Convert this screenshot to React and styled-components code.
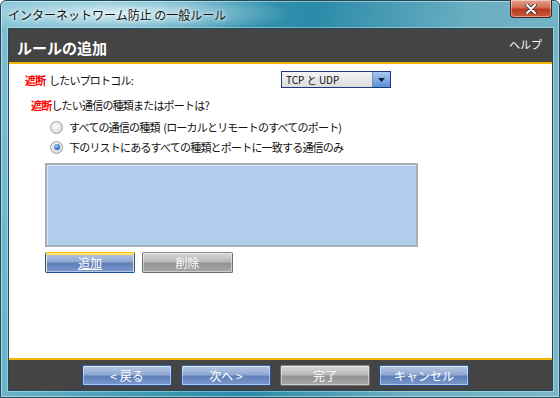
import React from 'react'
import styled, { createGlobalStyle } from 'styled-components'

const Global = createGlobalStyle`
  html, body { margin: 0; padding: 0; }
  body {
    width: 560px;
    height: 398px;
    overflow: hidden;
    font-family: "Noto Sans CJK JP", "Noto Sans", sans-serif;
  }
`

const Window = styled.div`
  width: 560px;
  height: 398px;
  box-sizing: border-box;
  display: flex;
  flex-direction: column;
  border: 1px solid #1f4a57;
  border-radius: 6px 6px 0 0;
  background:
    radial-gradient(ellipse 170px 22px at 120px 12px, rgba(235, 250, 255, 0.85), rgba(235, 250, 255, 0) 100%),
    linear-gradient(100deg, #7fc0d2 0%, #3d98b3 35%, #2a8aa8 50%, #6aaec2 75%, #79b7c8 100%);
  box-shadow: inset 0 0 0 1px rgba(255, 255, 255, 0.45);
`

const TitleBar = styled.div`
  height: 27px;
  display: flex;
  align-items: flex-start;
  justify-content: space-between;
  padding-left: 7px;
`

const TitleText = styled.div`
  font-size: 12px;
  line-height: 12px;
  margin-top: 8px;
  color: #111;
  text-shadow: 0 0 6px #fff, 0 0 3px #fff;
`

const CloseButton = styled.div`
  width: 42px;
  height: 18px;
  margin-right: 7px;
  margin-top: -1px;
  box-sizing: border-box;
  border: 1px solid #4a2420;
  border-top: none;
  border-radius: 0 0 4px 4px;
  background: linear-gradient(#e7a592 0%, #d26a50 45%, #b8391f 55%, #cc5a3c 100%);
  box-shadow: inset 0 0 0 1px rgba(255, 255, 255, 0.4);
  display: flex;
  align-items: center;
  justify-content: center;
`

const Client = styled.div`
  flex: 1;
  margin: 0 6px 6px 7px;
  display: flex;
  flex-direction: column;
  border: 1px solid #1e4b59;
  box-shadow: 0 0 0 1px rgba(255, 255, 255, 0.35);
  background: #444;
`

const Header = styled.div`
  height: 33px;
  display: flex;
  justify-content: space-between;
  align-items: flex-start;
  padding: 0 10px 0 8px;
  color: #fff;
  border-bottom: 2px solid #f4b400;
`

const HeaderTitle = styled.div`
  font-size: 15px;
  font-weight: 700;
  line-height: 16px;
  margin-top: 11px;
`

const Help = styled.div`
  font-size: 11px;
  line-height: 11px;
  margin-top: 10px;
`

const Content = styled.div`
  flex: 1;
  background: #fff;
  padding: 7px 0 0 16px;
  font-size: 11px;
  letter-spacing: -0.8px;
  word-spacing: 2px;
  color: #111;
  display: flex;
  flex-direction: column;
`

const Row = styled.div`
  display: flex;
  align-items: center;
  height: 17px;
`

const Label = styled.div`
  width: 256px;
  white-space: nowrap;
`

const Red = styled.span`
  color: #f00;
  font-weight: 700;
`

const Select = styled.div`
  width: 110px;
  height: 17px;
  box-sizing: border-box;
  border: 1px solid #1a3a7a;
  display: flex;
  font-size: 10px;
  letter-spacing: 0;
  word-spacing: 0;
`

const SelectValue = styled.div`
  flex: 1;
  background: linear-gradient(#f4f4f4, #dcdcdc);
  padding-left: 4px;
  line-height: 15px;
  border-right: 1px solid #7a8fb8;
`

const SelectArrow = styled.div`
  width: 17px;
  background: linear-gradient(#a9c8ee, #5c8fd8);
  display: flex;
  align-items: center;
  justify-content: center;
`

const Question = styled.div`
  margin: 9px 0 0 6px;
  line-height: 17px;
  height: 17px;
`

const Option = styled.div`
  display: flex;
  align-items: center;
  height: 20px;
  margin-left: 25px;
  gap: 6px;
  margin-top: ${p => p.$first ? 3 : 0}px;
`

const Radio = styled.div`
  width: 13px;
  height: 13px;
  border-radius: 50%;
  box-sizing: border-box;
  border: 1px solid #a0a0a0;
  background: radial-gradient(circle at 45% 40%, #fdfdfd 0%, #e2e2e2 60%, #c8c8c8 100%);
  display: flex;
  align-items: center;
  justify-content: center;
  &::after {
    content: '';
    width: 6px;
    height: 6px;
    border-radius: 50%;
    background: ${p => p.$checked ? 'radial-gradient(circle at 40% 35%, #9ad8ff, #1a5fb4 70%, #0d3d80)' : 'transparent'};
  }
`

const ListBox = styled.div`
  width: 373px;
  height: 84px;
  box-sizing: border-box;
  margin: 6px 0 0 20px;
  border: 2px solid #a6aeb8;
  box-shadow: inset 1px 1px 0 #d8e6f4;
  background: #b0cdeb;
`

const ButtonRow = styled.div`
  display: flex;
  gap: 7px;
  margin: 5px 0 0 20px;
`

const Button = styled.div`
  width: ${p => p.$w || 90}px;
  height: 21px;
  box-sizing: border-box;
  border-radius: 2px;
  display: flex;
  align-items: center;
  justify-content: center;
  font-size: 12px;
  letter-spacing: 0;
  word-spacing: 0;
  color: #fff;
  border: 1px solid ${p => p.$grey ? '#6d6d6d' : '#1d4f9a'};
  border-top-color: ${p => p.$focus ? '#f2c200' : p.$grey ? '#8a8a8a' : '#3b6ab0'};
  box-shadow: inset 0 0 0 1px rgba(255, 255, 255, 0.45)${p => p.$focus ? ', inset 0 1px 0 1px #ffd84a' : ''};
  background: ${p => p.$grey
    ? 'linear-gradient(#d8d8d8 0%, #b8b8b8 45%, #949494 55%, #a8a8a8 100%)'
    : 'linear-gradient(#b9c9e4 0%, #8fa8d2 45%, #5d7fba 55%, #7b98cb 100%)'};
  text-decoration: ${p => p.$underline ? 'underline' : 'none'};
`

const Footer = styled.div`
  height: 30px;
  border-top: 2px solid #f4b400;
  display: flex;
  align-items: center;
  justify-content: flex-end;
  gap: 9px;
  padding-right: 83px;
`

export default function App() {
  return (
    <>
      <Global />
      <Window>
        <TitleBar>
          <TitleText>インターネットワーム防止 の一般ルール</TitleText>
          <CloseButton>
            <svg width="12" height="10" viewBox="0 0 12 10">
              <path d="M2 1 L10 9 M10 1 L2 9" stroke="#3a3a3a" strokeWidth="3.6" strokeLinecap="round" />
              <path d="M2 1 L10 9 M10 1 L2 9" stroke="#fff" strokeWidth="2" strokeLinecap="round" />
            </svg>
          </CloseButton>
        </TitleBar>
        <Client>
          <Header>
            <HeaderTitle>ルールの追加</HeaderTitle>
            <Help>ヘルプ</Help>
          </Header>
          <Content>
            <Row>
              <Label><Red>遮断</Red> したいプロトコル:</Label>
              <Select>
                <SelectValue>TCP と UDP</SelectValue>
                <SelectArrow>
                  <svg width="7" height="4" viewBox="0 0 7 4">
                    <path d="M0 0 H7 L3.5 4 Z" fill="#10204a" />
                  </svg>
                </SelectArrow>
              </Select>
            </Row>
            <Question><Red>遮断</Red>したい通信の種類またはポートは?</Question>
            <Option $first>
              <Radio />
              <span>すべての通信の種類 (ローカルとリモートのすべてのポート)</span>
            </Option>
            <Option>
              <Radio $checked />
              <span>下のリストにあるすべての種類とポートに一致する通信のみ</span>
            </Option>
            <ListBox />
            <ButtonRow>
              <Button $focus $underline>追加</Button>
              <Button $grey $w={91}>削除</Button>
            </ButtonRow>
          </Content>
          <Footer>
            <Button>&lt; 戻る</Button>
            <Button>次へ &gt;</Button>
            <Button $grey>完了</Button>
            <Button>キャンセル</Button>
          </Footer>
        </Client>
      </Window>
    </>
  )
}
